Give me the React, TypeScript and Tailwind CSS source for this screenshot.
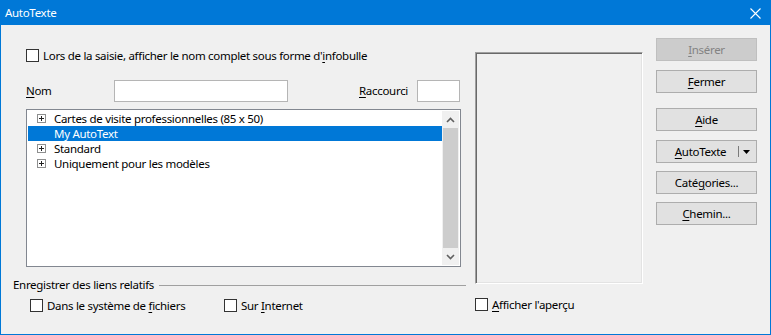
import type { ReactNode } from 'react';

const font = { fontFamily: '"Noto Sans", "Open Sans", sans-serif' };

function U({ children }: { children: ReactNode }) {
  return <span className="underline underline-offset-2 decoration-1">{children}</span>;
}

function Check({ children }: { children: ReactNode }) {
  return (
    <div className="flex items-center h-[13px]">
      <div className="w-[13px] h-[13px] border border-[#333333] bg-white shrink-0" />
      <span className="ml-[4px] leading-none whitespace-nowrap">{children}</span>
    </div>
  );
}

function Btn({ children, disabled }: { children: ReactNode; disabled?: boolean }) {
  return (
    <div
      className={
        disabled
          ? 'h-[23px] w-[101px] flex items-center justify-center border border-[#bfbfbf] bg-[#cccccc] text-[#838383]'
          : 'h-[23px] w-[101px] flex items-center justify-center border border-[#adadad] bg-[#e1e1e1]'
      }
    >
      {children}
    </div>
  );
}

function Plus() {
  return (
    <svg width="9" height="9" viewBox="0 0 9 9" className="shrink-0">
      <rect x="0.5" y="0.5" width="8" height="8" fill="#fff" stroke="#8e8f8f" />
      <path d="M2 4.5h5M4.5 2v5" stroke="#222" />
    </svg>
  );
}

const rows = [
  { label: 'Cartes de visite professionnelles (85 x 50)', plus: true },
  { label: 'My AutoText', plus: false, sel: true },
  { label: 'Standard', plus: true },
  { label: 'Uniquement pour les modèles', plus: true },
];

export default function App() {
  return (
    <div
      className="w-[771px] h-[335px] border border-[#0078d7] bg-[#f0f0f0] flex flex-col text-[11.5px] tracking-[-0.3px] text-black overflow-hidden"
      style={font}
    >
      <div className="h-[24px] bg-[#0078d7] text-white flex items-center justify-between pl-[4px] pr-[9px] shrink-0">
        <span>AutoTexte</span>
        <svg width="11" height="11" viewBox="0 0 11 11">
          <path d="M0.5 0.5l10 10M10.5 0.5l-10 10" stroke="#fff" strokeWidth="1.1" />
        </svg>
      </div>

      <div className="flex flex-1">
        {/* left column */}
        <div className="w-[453px] ml-[12px] flex flex-col">
          <div className="mt-[24px] pl-[13px]">
            <Check>
              Lors de la saisie, afficher le nom complet sous forme d'<U>i</U>nfobulle
            </Check>
          </div>

          <div className="mt-[18px] pl-[13px] flex items-center h-[22px]">
            <span className="w-[88px]">
              <U>N</U>om
            </span>
            <div className="w-[174px] h-[22px] border border-[#b5b5b5] bg-white" />
            <span className="ml-[71px] w-[58px]">
              <U>R</U>accourci
            </span>
            <div className="w-[43px] h-[22px] border border-[#b5b5b5] bg-white" />
          </div>

          <div className="mt-[7px] ml-[13px] w-[435px] h-[158px] border border-[#828790] bg-white flex p-[1px]">
            <div className="flex-1 flex flex-col">
              {rows.map((r) => (
                <div
                  key={r.label}
                  className={
                    r.sel
                      ? 'h-[15px] leading-[15px] flex items-center bg-[#0078d7] text-white'
                      : 'h-[15px] leading-[15px] flex items-center'
                  }
                >
                  <span className="w-[26px] flex justify-center pl-[1px]">{r.plus ? <Plus /> : null}</span>
                  <span className="whitespace-nowrap">{r.label}</span>
                </div>
              ))}
            </div>
            <div className="w-[17px] flex flex-col bg-[#f0f0f0]">
              <div className="h-[17px] flex items-center justify-center">
                <svg width="9" height="6" viewBox="0 0 9 6">
                  <path d="M1 5l3.5-3.5L8 5" stroke="#606060" strokeWidth="1.6" fill="none" />
                </svg>
              </div>
              <div className="flex-1 bg-[#cdcdcd] mx-[1px]" />
              <div className="h-[17px] flex items-center justify-center">
                <svg width="9" height="6" viewBox="0 0 9 6">
                  <path d="M1 1l3.5 3.5L8 1" stroke="#606060" strokeWidth="1.6" fill="none" />
                </svg>
              </div>
            </div>
          </div>

          <div className="mt-[11px] flex items-center h-[14px]">
            <span className="whitespace-nowrap">Enregistrer des liens relatifs</span>
            <div className="flex-1 ml-[5px] h-px bg-[#a0a0a0]" />
          </div>

          <div className="mt-[7px] pl-[17px] flex">
            <div className="w-[194px]">
              <Check>
                Dans le système de <U>f</U>ichiers
              </Check>
            </div>
            <Check>
              Sur <U>I</U>nternet
            </Check>
          </div>
        </div>

        {/* preview column */}
        <div className="ml-[9px] w-[168px] flex flex-col">
          <div className="mt-[27px] h-[232px] border border-t-[#a0a0a0] border-l-[#a0a0a0] border-r-white border-b-white shadow-[inset_1px_1px_0_#696969,inset_-1px_-1px_0_#e3e3e3]" />
          <div className="mt-[14px]">
            <Check>
              <U>A</U>fficher l'aperçu
            </Check>
          </div>
        </div>

        {/* buttons */}
        <div className="ml-[13px] flex flex-col mt-[13px]">
          <Btn disabled>
            <U>I</U>nsérer
          </Btn>
          <div className="mt-[9px]">
            <Btn>
              <U>F</U>ermer
            </Btn>
          </div>
          <div className="mt-[15px]">
            <Btn>
              <U>A</U>ide
            </Btn>
          </div>
          <div className="mt-[9px]">
            <div className="h-[23px] w-[101px] flex items-center border border-[#adadad] bg-[#e1e1e1]">
              <span className="flex-1 text-center pl-[6px]">
                <U>A</U>utoTexte
              </span>
              <div className="w-px h-[11px] bg-[#7a7a7a]" />
              <svg width="16" height="11" viewBox="0 0 16 11" className="mr-[1px]">
                <path d="M4 4h7l-3.5 4z" fill="#000" />
              </svg>
            </div>
          </div>
          <div className="mt-[8px]">
            <Btn>
              Caté<U>g</U>ories...
            </Btn>
          </div>
          <div className="mt-[8px]">
            <Btn>
              <U>C</U>hemin...
            </Btn>
          </div>
        </div>
      </div>
    </div>
  );
}
